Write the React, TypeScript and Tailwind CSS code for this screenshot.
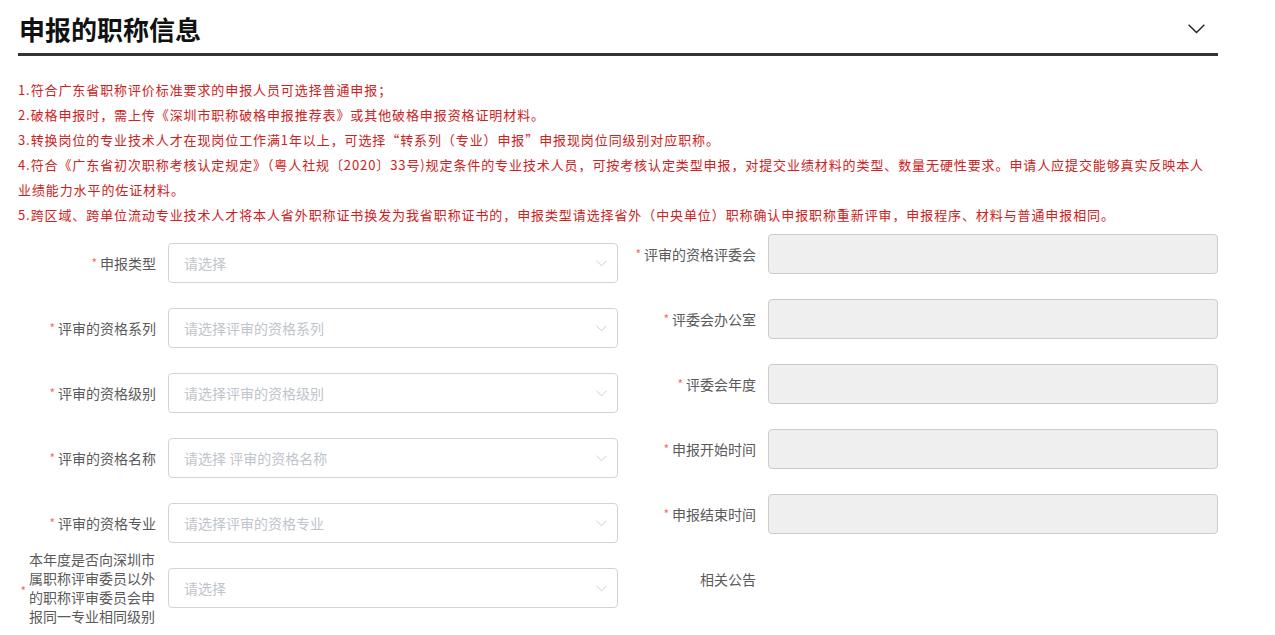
import React from "react";

const font = { fontFamily: '"Noto Sans CJK SC", "Microsoft YaHei", sans-serif' };

function Chevron({ className }: { className?: string }) {
  return (
    <svg viewBox="0 0 12 7" className={className} fill="none" stroke="currentColor" strokeWidth="1">
      <path d="M0.5 0.5 L6 6 L11.5 0.5" />
    </svg>
  );
}

function Label({ text, required = true }: { text: string; required?: boolean }) {
  return (
    <div className="w-[150px] shrink-0 pr-[12px] flex items-center justify-end text-[14px] text-[#5a5a5a]">
      {required && <span className="text-[#f56c6c] text-[12px] mr-[3px] leading-none">*</span>}
      <span className="leading-[20px] whitespace-nowrap">{text}</span>
    </div>
  );
}

function SelectBox({ placeholder }: { placeholder: string }) {
  return (
    <div className="w-[450px] h-[40px] border border-[#d3d3d3] rounded-[4px] bg-white flex items-center justify-between pl-[15px] pr-[10px]">
      <span className="text-[14px] text-[#c0c4cc]">{placeholder}</span>
      <Chevron className="w-[11px] h-[7px] text-[#c8c8c8]" />
    </div>
  );
}

function Disabled() {
  return <div className="w-[450px] h-[40px] border border-[#cccccc] rounded-[4px] bg-[#efefef]" />;
}

const notices = [
  "1.符合广东省职称评价标准要求的申报人员可选择普通申报；",
  "2.破格申报时，需上传《深圳市职称破格申报推荐表》或其他破格申报资格证明材料。",
  "3.转换岗位的专业技术人才在现岗位工作满1年以上，可选择“转系列（专业）申报”申报现岗位同级别对应职称。",
  "4.符合《广东省初次职称考核认定规定》（粤人社规〔2020〕33号)规定条件的专业技术人员，可按考核认定类型申报，对提交业绩材料的类型、数量无硬性要求。申请人应提交能够真实反映本人业绩能力水平的佐证材料。",
  "5.跨区域、跨单位流动专业技术人才将本人省外职称证书换发为我省职称证书的，申报类型请选择省外（中央单位）职称确认申报职称重新评审，申报程序、材料与普通申报相同。",
];

export default function App() {
  const left = [
    ["申报类型", "请选择"],
    ["评审的资格系列", "请选择评审的资格系列"],
    ["评审的资格级别", "请选择评审的资格级别"],
    ["评审的资格名称", "请选择 评审的资格名称"],
    ["评审的资格专业", "请选择评审的资格专业"],
  ];
  const right = ["评审的资格评委会", "评委会办公室", "评委会年度", "申报开始时间", "申报结束时间"];
  return (
    <div className="w-[1275px] h-[635px] overflow-hidden bg-white" style={font}>
      <div className="ml-[18px] w-[1200px]">
        <div className="h-[56px] border-b-[3px] border-[#333] flex items-center justify-between pt-[4px]">
          <h1 className="text-[26px] font-bold text-[#111] leading-none pl-[1px]">申报的职称信息</h1>
          <Chevron className="w-[19px] h-[10px] text-[#222] mr-[12px]" />
        </div>
        <div className="mt-[21px] pr-[6px] text-[13px] leading-[25px] text-[#cc2222] tracking-[0.9px]">
          {notices.map((n) => (
            <p key={n}>{n}</p>
          ))}
        </div>
        <div className="mt-[7px] flex">
          <div className="w-[600px] pt-[9px] flex flex-col gap-[25px]">
            {left.map(([l, p]) => (
              <div key={l} className="flex h-[40px]">
                <Label text={l} />
                <SelectBox placeholder={p} />
              </div>
            ))}
            <div className="flex h-[40px] items-center">
              <div className="w-[150px] shrink-0 pr-[12px] flex items-center justify-end text-[14px] text-[#5a5a5a]">
                <span className="text-[#f56c6c] text-[12px] mr-[3px] leading-none mt-[6px]">*</span>
                <span className="leading-[19px] w-[127px] shrink-0">本年度是否向深圳市属职称评审委员以外的职称评审委员会申报同一专业相同级别</span>
              </div>
              <SelectBox placeholder="请选择" />
            </div>
          </div>
          <div className="w-[600px] flex flex-col gap-[25px]">
            {right.map((l) => (
              <div key={l} className="flex h-[40px]">
                <Label text={l} />
                <Disabled />
              </div>
            ))}
            <div className="flex h-[40px]">
              <Label text="相关公告" required={false} />
            </div>
          </div>
        </div>
      </div>
    </div>
  );
}
